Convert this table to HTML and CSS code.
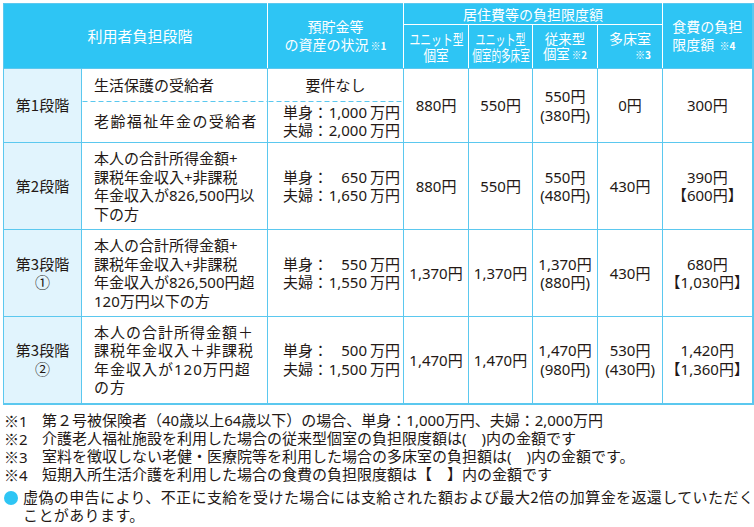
FILE: index.html
```html
<!DOCTYPE html>
<html lang="ja">
<head>
<meta charset="utf-8">
<title>利用者負担段階</title>
<link rel="stylesheet" href="styles.css">
</head>
<body>
<table class="fee">
  <colgroup>
    <col class="c1"><col class="c2"><col class="c3"><col class="c4"><col class="c5"><col class="c6"><col class="c7"><col class="c8">
  </colgroup>
  <thead>
    <tr class="h1">
      <th colspan="2" rowspan="2" class="first">利用者負担段階</th>
      <th rowspan="2" class="two">預貯金等<br>の資産の状況<span class="mark">※1</span></th>
      <th colspan="4" class="group">居住費等の負担限度額</th>
      <th rowspan="2" class="last"><span class="stack left">食費の負担<br>限度額 <span class="mark">※4</span></span></th>
    </tr>
    <tr class="h2">
      <th class="sub"><div class="subhd"><span class="cond big k72">ユニット型</span><span class="cond big k84">個室</span></div></th>
      <th class="sub"><div class="subhd"><span class="cond big k67">ユニット型</span><span class="cond big k64">個室的多床室</span></div></th>
      <th class="sub"><div class="subhd"><span class="cond k95">従来型</span><span class="cond k95">個室<span class="mark">※2</span></span></div></th>
      <th class="sub"><span class="stack right">多床室<br><span class="mark">※3</span></span></th>
    </tr>
  </thead>
  <tbody>
    <tr class="r1a">
      <td rowspan="2" class="stage">第1段階</td>
      <td class="cond-cell split">生活保護の受給者</td>
      <td class="asset split center">要件なし</td>
      <td rowspan="2" class="price">880円</td>
      <td rowspan="2" class="price">550円</td>
      <td rowspan="2" class="price">550円<br>(380円)</td>
      <td rowspan="2" class="price">0円</td>
      <td rowspan="2" class="price">300円</td>
    </tr>
    <tr class="r1b">
      <td class="cond-cell dashed wide">老齢福祉年金の受給者</td>
      <td class="asset dashed">
        <div class="amt"><span class="lbl">単身：</span><span class="num">1,000</span><span class="unit">万円</span></div>
        <div class="amt"><span class="lbl">夫婦：</span><span class="num">2,000</span><span class="unit">万円</span></div>
      </td>
    </tr>
    <tr class="r2">
      <td class="stage">第2段階</td>
      <td class="cond-cell">本人の合計所得金額+<br>課税年金収入+非課税<br>年金収入が826,500円以<br>下の方</td>
      <td class="asset">
        <div class="amt"><span class="lbl">単身：</span><span class="num">650</span><span class="unit">万円</span></div>
        <div class="amt"><span class="lbl">夫婦：</span><span class="num">1,650</span><span class="unit">万円</span></div>
      </td>
      <td class="price">880円</td>
      <td class="price">550円</td>
      <td class="price">550円<br>(480円)</td>
      <td class="price">430円</td>
      <td class="price">390円<br>【600円】</td>
    </tr>
    <tr class="r3">
      <td class="stage">第3段階<br><span class="cjk">①</span></td>
      <td class="cond-cell">本人の合計所得金額+<br>課税年金収入+非課税<br>年金収入が826,500円超<br>120万円以下の方</td>
      <td class="asset">
        <div class="amt"><span class="lbl">単身：</span><span class="num">550</span><span class="unit">万円</span></div>
        <div class="amt"><span class="lbl">夫婦：</span><span class="num">1,550</span><span class="unit">万円</span></div>
      </td>
      <td class="price">1,370円</td>
      <td class="price">1,370円</td>
      <td class="price">1,370円<br>(880円)</td>
      <td class="price">430円</td>
      <td class="price">680円<br>【1,030円】</td>
    </tr>
    <tr class="r4">
      <td class="stage">第3段階<br><span class="cjk">②</span></td>
      <td class="cond-cell spaced">本人の合計所得金額＋<br>課税年金収入＋非課税<br>年金収入が120万円超<br>の方</td>
      <td class="asset">
        <div class="amt"><span class="lbl">単身：</span><span class="num">500</span><span class="unit">万円</span></div>
        <div class="amt"><span class="lbl">夫婦：</span><span class="num">1,500</span><span class="unit">万円</span></div>
      </td>
      <td class="price">1,470円</td>
      <td class="price">1,470円</td>
      <td class="price">1,470円<br>(980円)</td>
      <td class="price">530円<br>(430円)</td>
      <td class="price">1,420円<br>【1,360円】</td>
    </tr>
  </tbody>
</table>

<ul class="notes">
  <li><span class="nm"><span class="cjk">※</span>1</span><span>第２号被保険者（40歳以上64歳以下）の場合、単身：1,000万円、夫婦：2,000万円</span></li>
  <li><span class="nm"><span class="cjk">※</span>2</span><span>介護老人福祉施設を利用した場合の従来型個室の負担限度額は(　)内の金額です</span></li>
  <li><span class="nm"><span class="cjk">※</span>3</span><span>室料を徴収しない老健・医療院等を利用した場合の多床室の負担額は(　)内の金額です。</span></li>
  <li><span class="nm"><span class="cjk">※</span>4</span><span>短期入所生活介護を利用した場合の食費の負担限度額は【　】内の金額です</span></li>
</ul>

<div class="warn">
  <span class="dot"></span>
  <p>虚偽の申告により、不正に支給を受けた場合には支給された額および最大2倍の加算金を返還していただく<br>ことがあります。</p>
</div>
</body>
</html>
```

FILE: styles.css
```css
* { box-sizing: border-box; }
html, body { margin: 0; }
body {
  width: 754px;
  padding: 3px 0 0 3px;
  background: #fff;
  color: #231815;
  font-family: "Noto Sans", "Noto Sans CJK JP", sans-serif;
  font-size: 15px;
}
.cjk { font-family: "Noto Sans CJK JP", sans-serif; }

/* table */
.fee {
  border-collapse: collapse;
  table-layout: fixed;
  width: 750px;
  border-right: 2px solid #5bc8ef;
  border-bottom: 2px solid #5bc8ef;
}
.c1 { width: 78px; }
.c2 { width: 186px; }
.c3 { width: 136px; }
.c4 { width: 65px; }
.c5 { width: 64px; }
.c6 { width: 65px; }
.c7 { width: 65px; }
.c8 { width: 90px; }

.fee th {
  background: #2ec5f4;
  color: #fff;
  font-weight: 400;
  font-size: 14px;
  line-height: 18px;
  border: 1px solid #fff;
  padding: 0;
  text-align: center;
  vertical-align: middle;
  white-space: nowrap;
  font-family: "Noto Sans CJK JP", sans-serif;
}
.fee .h1 th { border-top-color: #5bc8ef; }
.fee th.first { border-left-color: #5bc8ef; font-size: 15px; padding-left: 9px; }
.fee th.last { border-right: 2px solid #5bc8ef; }
.fee th.sub { line-height: 15.5px; }
.fee .h2 th { border-bottom-color: #5bc8ef; }
.fee th.first, .fee th.two, .fee th.last { border-bottom-color: #5bc8ef; }
.h1 { height: 21px; }
.h2 { height: 44px; }

.mark { font-size: 10px; font-weight: 700; margin-left: 2px; }
.stack { display: inline-block; }
.stack.left { text-align: left; }
.stack.right { text-align: right; }

.subhd {
  display: flex;
  flex-direction: column;
  align-items: center;
}
.cond { display: block; white-space: nowrap; }
.cond.big { font-size: 15px; }
.k64 { transform: scaleX(0.64); }
.k67 { transform: scaleX(0.67); }
.k72 { transform: scaleX(0.72); }
.k84 { transform: scaleX(0.84); }
.k95 { transform: scaleX(0.96); }

.fee td {
  border: 1px solid #5bc8ef;
  padding: 0;
  line-height: 18.5px;
  vertical-align: middle;
  white-space: nowrap;
}
.r1a { height: 32px; }
.r1b { height: 42px; }
.r2, .r3, .r4 { height: 87px; }

.stage {
  background: #e1f4fd;
  text-align: center;
  font-family: "Noto Sans CJK JP", sans-serif;
}
.cond-cell { padding-left: 12px !important; }
.cond-cell.wide { letter-spacing: 1.4px; }
.cond-cell.spaced { letter-spacing: 1px; }
.center { text-align: center; }
.asset { padding-left: 15px !important; }
.asset.center { padding-left: 0 !important; }

.fee td.split { border-bottom-style: none; }
.fee td.dashed {
  border-top-style: none;
  background-image: linear-gradient(90deg, #5bc8ef 0 5px, transparent 5px 8px);
  background-size: 8px 1px;
  background-repeat: repeat-x;
  background-position: 0 0;
}
.amt { display: flex; }
.lbl { font-family: "Noto Sans CJK JP", sans-serif; }
.num { width: 39px; text-align: right; }
.unit { margin-left: 3px; font-family: "Noto Sans CJK JP", sans-serif; }

.price { text-align: center; }

/* notes */
.notes {
  list-style: none;
  margin: 7px 0 0 1px;
  padding: 0;
  line-height: 17px;
}
.notes li { display: grid; grid-template-columns: 38px 1fr; white-space: nowrap; }

.warn {
  display: grid;
  grid-template-columns: 19px 1fr;
  margin: 4px 0 0 1px;
  line-height: 18px;
}
.warn p {
  margin: 0;
  line-height: 18px;
  white-space: nowrap;
  letter-spacing: 0.4px;
  font-family: "Noto Sans CJK JP", sans-serif;
}
.dot {
  width: 14px;
  height: 14px;
  border-radius: 50%;
  background: #2ec5f4;
  margin-top: 3px;
}
```
